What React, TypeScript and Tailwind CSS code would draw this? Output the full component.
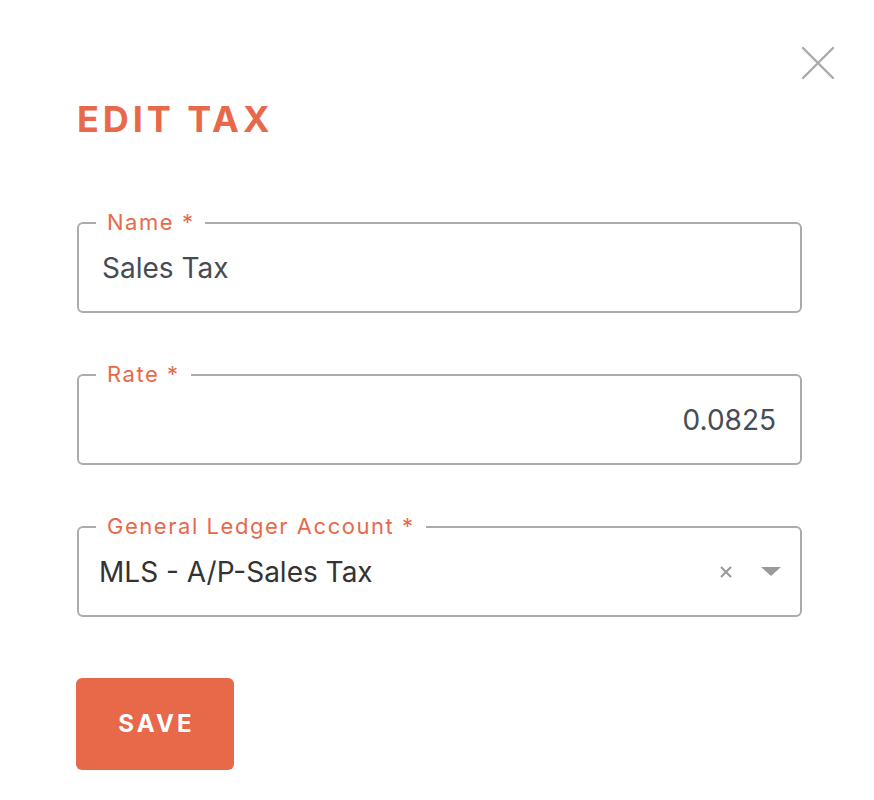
import React from "react";

const font = { fontFamily: "Inter, 'Open Sans', sans-serif" };

function Field({
  label,
  children,
}: {
  label: string;
  children: React.ReactNode;
}) {
  return (
    <div className="relative h-[91px] rounded-[6px] border-2 border-[#a9acab] flex items-center">
      <span className="absolute -top-[15px] left-[17px] bg-white px-[11px] text-[22px] leading-[26px] tracking-[0.07em] text-[#e8694a]">
        {label}
      </span>
      {children}
    </div>
  );
}

export default function App() {
  return (
    <div className="relative w-full h-[800px] bg-white" style={font}>
      <button className="absolute left-[800px] top-[45px] w-[36px] h-[36px] flex items-center justify-center">
        <svg width="36" height="36" viewBox="0 0 36 36">
          <path
            d="M3 3 L33 33 M33 3 L3 33"
            stroke="#a8aba6"
            strokeWidth="2.4"
            strokeLinecap="round"
          />
        </svg>
      </button>
      <div className="pl-[77px] pr-[72px] pt-[97px]">
        <h1 className="text-[36px] leading-[44px] font-bold tracking-[0.11em] text-[#e8694a]">
          EDIT TAX
        </h1>
        <div className="mt-[81px] flex flex-col gap-[61px]">
          <Field label="Name *">
            <span className="pl-[23px] text-[28px] text-[#454c55]">
              Sales Tax
            </span>
          </Field>
          <Field label="Rate *">
            <span className="ml-auto pr-[24px] text-[28px] text-[#454c55]">
              0.0825
            </span>
          </Field>
          <Field label="General Ledger Account *">
            <span className="pl-[20px] text-[28px] text-[#333333]">
              MLS - A/P-Sales Tax
            </span>
            <span className="ml-auto flex items-center gap-[29px] pr-[19px]">
              <svg width="12" height="12" viewBox="0 0 12 12">
                <path
                  d="M1 1 L11 11 M11 1 L1 11"
                  stroke="#9a9a9a"
                  strokeWidth="2.2"
                />
              </svg>
              <svg width="20" height="9" viewBox="0 0 20 9">
                <path d="M0 0 L20 0 L10 9 Z" fill="#9a9a9a" />
              </svg>
            </span>
          </Field>
          <button className="-ml-px w-[158px] h-[92px] rounded-[6px] bg-[#e8694a] pl-[3px] text-white text-[24px] font-bold tracking-[0.13em]">
            SAVE
          </button>
        </div>
      </div>
    </div>
  );
}
